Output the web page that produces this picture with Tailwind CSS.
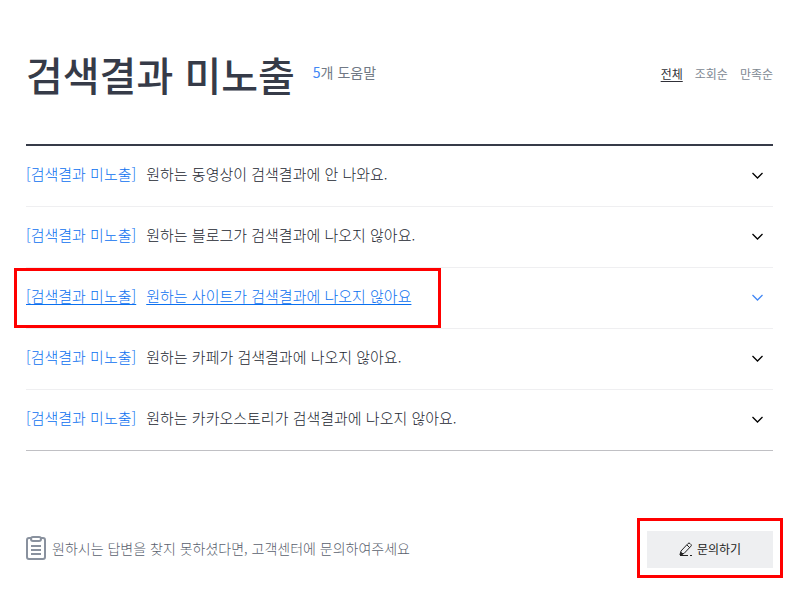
<!DOCTYPE html>
<html lang="ko">
<head>
    <meta charset="UTF-8">
    <meta name="viewport" content="width=device-width, initial-scale=1.0">
    <title>검색결과 미노출 - 고객센터</title>
    <script src="https://cdn.jsdelivr.net/npm/@tailwindcss/browser@4"></script>
</head>
<body class="bg-white font-['Noto_Sans_CJK_KR',sans-serif] text-[#363b48]">
    <main class="px-[26px] pt-[42px]">

        <!-- 제목 -->
        <header class="flex items-center justify-between pb-[38px]">
            <div class="flex items-center gap-[18px]">
                <h1 class="text-[40px] leading-16 font-medium">검색결과 미노출</h1>
                <p class="pb-1 text-sm text-[#717985]"><span class="text-[#4287f5]">5</span>개 도움말</p>
            </div>
            <nav class="flex gap-3 text-xs text-[#808893]">
                <a href="#" class="text-[#303038] underline underline-offset-2">전체</a>
                <a href="#">조회순</a>
                <a href="#">만족순</a>
            </nav>
        </header>

        <!-- 도움말 목록 -->
        <ul class="border-t-2 border-b border-t-[#363b48] border-b-[#c0c0c4] text-[15px] font-light text-[#22262f]">
            <li class="border-b border-[#efeff1]">
                <a href="#" class="flex h-15 items-center gap-[10px] pb-1">
                    <span class="text-[#0a70f0]">[검색결과 미노출]</span>
                    <span>원하는 동영상이 검색결과에 안 나와요.</span>
                    <svg class="mr-2 ml-auto h-4 w-4 text-black" viewBox="0 0 16 16" fill="none" stroke="currentColor" stroke-width="1.3"><path d="M3.500 7l5 5 5-5"/></svg>
                </a>
            </li>
            <li class="border-b border-[#efeff1]">
                <a href="#" class="flex h-15 items-center gap-[10px] pb-1">
                    <span class="text-[#0a70f0]">[검색결과 미노출]</span>
                    <span>원하는 블로그가 검색결과에 나오지 않아요.</span>
                    <svg class="mr-2 ml-auto h-4 w-4 text-black" viewBox="0 0 16 16" fill="none" stroke="currentColor" stroke-width="1.3"><path d="M3.500 7l5 5 5-5"/></svg>
                </a>
            </li>
            <li class="relative border-b border-[#efeff1]">
                <a href="#" class="flex h-15 items-center gap-[10px] pb-1 text-[#0a70f0]">
                    <span class="underline underline-offset-2">[검색결과 미노출]</span>
                    <span class="underline underline-offset-2">원하는 사이트가 검색결과에 나오지 않아요</span>
                    <svg class="mr-2 ml-auto h-4 w-4 text-[#4287f5]" viewBox="0 0 16 16" fill="none" stroke="currentColor" stroke-width="1.3"><path d="M3.500 7l5 5 5-5"/></svg>
                </a>
                <!-- 강조 표시 -->
                <div class="pointer-events-none absolute -left-3 top-0 h-15 w-[427px] border-3 border-[#ff0000]"></div>
            </li>
            <li class="border-b border-[#efeff1]">
                <a href="#" class="flex h-15 items-center gap-[10px] pb-1">
                    <span class="text-[#0a70f0]">[검색결과 미노출]</span>
                    <span>원하는 카페가 검색결과에 나오지 않아요.</span>
                    <svg class="mr-2 ml-auto h-4 w-4 text-black" viewBox="0 0 16 16" fill="none" stroke="currentColor" stroke-width="1.3"><path d="M3.500 7l5 5 5-5"/></svg>
                </a>
            </li>
            <li>
                <a href="#" class="flex h-15 items-center gap-[10px] pb-1">
                    <span class="text-[#0a70f0]">[검색결과 미노출]</span>
                    <span>원하는 카카오스토리가 검색결과에 나오지 않아요.</span>
                    <svg class="mr-2 ml-auto h-4 w-4 text-black" viewBox="0 0 16 16" fill="none" stroke="currentColor" stroke-width="1.3"><path d="M3.500 7l5 5 5-5"/></svg>
                </a>
            </li>
        </ul>

        <!-- 문의 -->
        <div class="flex items-center justify-between pt-20 pb-6">
            <p class="flex items-center gap-[6px] pb-[3px] text-sm font-light text-[#59616e]">
                <svg class="h-6 w-5" viewBox="0 0 20 24" fill="none" stroke="#89919e" stroke-width="2">
                    <path d="M5 2H3a2 2 0 0 0-2 2v17a2 2 0 0 0 2 2h14a2 2 0 0 0 2-2V4a2 2 0 0 0-2-2h-2"/>
                    <rect x="5" y="1" width="10" height="4" rx="2"/>
                    <path d="M5 10h10M5 14h10M5 18h10"/>
                </svg>
                원하시는 답변을 찾지 못하셨다면, 고객센터에 문의하여주세요
            </p>
            <div class="relative">
                <button type="button" class="flex h-[37px] w-[126px] items-center justify-center gap-1 bg-[#eeeff1] pb-[2px] text-xs text-[#222222]">
                    <svg class="h-[14px] w-[14px]" viewBox="0 0 14 14" fill="none" stroke="#222222" stroke-width="1">
                        <path d="M1 12.500l1-3.500 7-7.500q1-1 2 0l1 1q.8.8 0 1.600L5 11.500z"/>
                        <path d="M8 3l3 3"/>
                        <path d="M1 13l1-2.500 2 1.500z" fill="#222222"/>
                        <path d="M1 13.500h8M11 13.500h2"/>
                    </svg>
                    문의하기
                </button>
                <!-- 강조 표시 -->
                <div class="pointer-events-none absolute -inset-x-[10px] -top-[13px] -bottom-[10px] border-3 border-[#ff0000]"></div>
            </div>
        </div>
    </main>
</body>
</html>
